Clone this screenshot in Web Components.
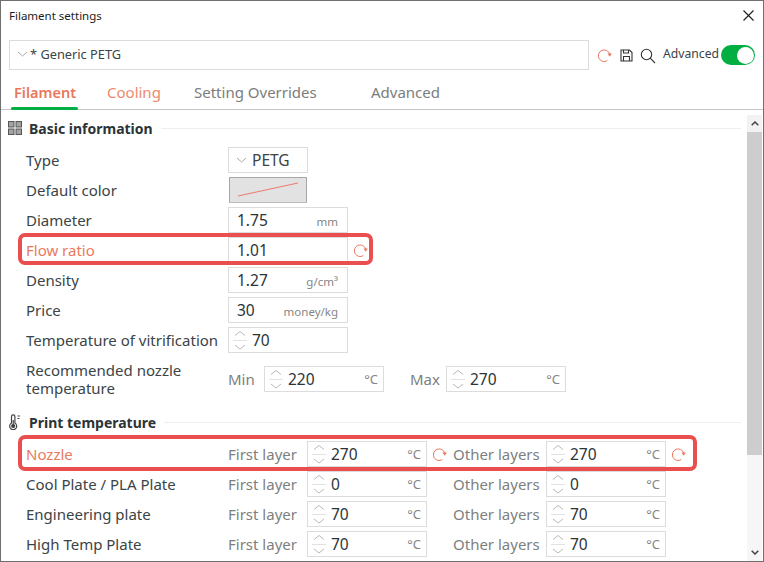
<!doctype html>
<html>
<head>
<meta charset="utf-8">
<style>
  html, body { margin: 0; background: #fff; }
  body { font-family: "Noto Sans", "Liberation Sans", sans-serif; color: #2b3436; }
</style>
</head>
<body>
<filament-dialog>
  <tab-item slot="tabs" active style="width:93px">Filament</tab-item>
  <tab-item slot="tabs" changed style="width:87px">Cooling</tab-item>
  <tab-item slot="tabs" style="width:177px">Setting Overrides</tab-item>
  <tab-item slot="tabs">Advanced</tab-item>

  <section-head icon="grid" style="height:36px;margin-bottom:-1px">Basic information</section-head>

  <setting-row label="Type"><combo-field>PETG</combo-field></setting-row>
  <setting-row label="Default color"><color-field></color-field></setting-row>
  <setting-row label="Diameter"><num-field value="1.75" unit="mm"></num-field></setting-row>
  <setting-row label="Flow ratio" changed>
    <num-field value="1.01"></num-field><reset-slot on></reset-slot>
    <red-mark slot="mark" style="width:355px;top:-2px;bottom:0"></red-mark>
  </setting-row>
  <setting-row label="Density"><num-field value="1.27" unit="g/cm³"></num-field></setting-row>
  <setting-row label="Price"><num-field value="30" unit="money/kg"></num-field></setting-row>
  <setting-row label="Temperature of vitrification"><num-field value="70" spin></num-field></setting-row>
  <setting-row tall label="Recommended nozzle temperature">
    <side-label style="width:36px">Min</side-label><num-field value="220" unit="°C" spin></num-field>
    <reset-slot></reset-slot>
    <side-label style="width:36px">Max</side-label><num-field value="270" unit="°C" spin></num-field>
  </setting-row>

  <section-head icon="thermo" style="height:40px;padding-top:6px">Print temperature</section-head>

  <setting-row label="Nozzle" changed>
    <side-label>First layer</side-label><num-field value="270" unit="°C" spin></num-field>
    <reset-slot on></reset-slot>
    <side-label style="width:93px">Other layers</side-label><num-field value="270" unit="°C" spin></num-field>
    <reset-slot on></reset-slot>
    <red-mark slot="mark" style="width:679px;top:-4px;bottom:-2px"></red-mark>
  </setting-row>
  <setting-row label="Cool Plate / PLA Plate">
    <side-label>First layer</side-label><num-field value="0" unit="°C" spin></num-field>
    <reset-slot></reset-slot>
    <side-label style="width:93px">Other layers</side-label><num-field value="0" unit="°C" spin></num-field>
  </setting-row>
  <setting-row label="Engineering plate">
    <side-label>First layer</side-label><num-field value="70" unit="°C" spin></num-field>
    <reset-slot></reset-slot>
    <side-label style="width:93px">Other layers</side-label><num-field value="70" unit="°C" spin></num-field>
  </setting-row>
  <setting-row label="High Temp Plate">
    <side-label>First layer</side-label><num-field value="70" unit="°C" spin></num-field>
    <reset-slot></reset-slot>
    <side-label style="width:93px">Other layers</side-label><num-field value="70" unit="°C" spin></num-field>
  </setting-row>
</filament-dialog>

<script>
const RESET_ICON = /* html */`
  <svg width="14" height="14" viewBox="0 0 14 14" fill="none" stroke="#ea7a5e" stroke-width="1">
    <path d="M9.300 12.600A5.800 5.800 0 1 1 11.700 6"/>
    <path d="M9.400 5.600h4.400L11.800 8.800z" stroke="none" fill="#ea7a5e"/>
  </svg>`;

class ResetSlot extends HTMLElement {
  constructor() {
    super();
    this.attachShadow({ mode: "open" });
  }

  connectedCallback() {
    this.shadowRoot.innerHTML = /* html */`
    <style>
      :host { display: flex; align-items: center; justify-content: center; width: 26px; height: 26px; flex: none; }
    </style>
    ${this.hasAttribute("on") ? RESET_ICON : ""}`;
  }
}

class SideLabel extends HTMLElement {
  constructor() {
    super();
    this.attachShadow({ mode: "open" });
    this.shadowRoot.innerHTML = /* html */`
    <style>
      :host { display: block; flex: none; width: 79px; color: #7d7f7f; font-size: 15px; white-space: nowrap; }
    </style>
    <slot></slot>`;
  }
}

class RedMark extends HTMLElement {
  constructor() {
    super();
    this.attachShadow({ mode: "open" });
    this.shadowRoot.innerHTML = /* html */`
    <style>
      :host {
        position: absolute;
        left: 17px;
        box-sizing: border-box;
        border: 4px solid #ea4f4f;
        border-radius: 7px;
        pointer-events: none;
      }
    </style>`;
  }
}

class NumField extends HTMLElement {
  constructor() {
    super();
    this.attachShadow({ mode: "open" });
  }

  connectedCallback() {
    const unit = this.getAttribute("unit") || "";
    const spin = this.hasAttribute("spin") ? /* html */`
      <svg class="spin" width="14" height="24" viewBox="0 0 14 24" fill="none" stroke="#b9b9b9" stroke-width="1">
        <path d="M2 7.500 7 3.500l5 4"/>
        <path d="M0 12.500h14" stroke="#e2e2e2"/>
        <path d="M2 17 7 21l5-4"/>
      </svg>` : "";
    this.shadowRoot.innerHTML = /* html */`
    <style>
      :host {
        display: flex;
        align-items: center;
        flex: none;
        box-sizing: border-box;
        width: 120px;
        height: 26px;
        padding: 0 9px 0 8px;
        background: #fff;
        border: 1px solid #dcdcdc;
      }
      :host([spin]) { padding: 0 5px 0 4px; }
      .spin { flex: none; margin-right: 5px; }
      .value { flex: 1; color: #2b3436; font-size: 15.500px; }
      .unit { color: #858585; font-size: 11.500px; margin-top: 2px; }
      :host([spin]) .unit { font-size: 13px; margin-top: 0; }
    </style>
    ${spin}
    <span class="value">${this.getAttribute("value")}</span>
    <span class="unit">${unit}</span>`;
  }
}

class ComboField extends HTMLElement {
  constructor() {
    super();
    this.attachShadow({ mode: "open" });
    this.shadowRoot.innerHTML = /* html */`
    <style>
      :host {
        display: flex;
        align-items: center;
        gap: 5px;
        flex: none;
        box-sizing: border-box;
        width: 80px;
        height: 26px;
        padding-left: 7px;
        border: 1px solid #dcdcdc;
        font-size: 15.500px;
      }
    </style>
    <svg width="11" height="6" viewBox="0 0 11 6" fill="none" stroke="#a9a9a9"><path d="M1 1l4.500 4L10 1"/></svg>
    <slot></slot>`;
  }
}

class ColorField extends HTMLElement {
  constructor() {
    super();
    this.attachShadow({ mode: "open" });
    this.shadowRoot.innerHTML = /* html */`
    <style>
      :host {
        display: block;
        flex: none;
        box-sizing: border-box;
        width: 78px;
        height: 26px;
        margin-left: 1px;
        background: #e2e2e2;
        border: 1px solid #a8a8a8;
        border-bottom-color: #bdbdbd;
      }
      svg { display: block; }
    </style>
    <svg width="76" height="24" viewBox="0 0 76 24"><path d="M8 18 68 5" stroke="#ea7a6a" fill="none"/></svg>`;
  }
}

class SettingRow extends HTMLElement {
  constructor() {
    super();
    this.attachShadow({ mode: "open" });
  }

  connectedCallback() {
    this.shadowRoot.innerHTML = /* html */`
    <style>
      :host {
        display: flex;
        align-items: center;
        position: relative;
        height: 30px;
        padding-left: 25px;
        font-size: 15px;
        color: #3b4446;
      }
      :host([tall]) { height: 40px; margin-top: 4px; }
      :host([changed]) .label { color: #ea7a5e; }
      .label { flex: none; width: 202px; line-height: 18px; white-space: nowrap; }
      :host([tall]) .label { width: 190px; margin-right: 12px; white-space: normal; }
    </style>
    <div class="label">${this.getAttribute("label")}</div>
    <slot></slot>
    <slot name="mark"></slot>`;
  }
}

class SectionHead extends HTMLElement {
  constructor() {
    super();
    this.attachShadow({ mode: "open" });
  }

  static get icons() {
    return {
      grid: /* html */`
        <svg width="14" height="14" viewBox="0 0 14 14" fill="#a3a3a3" stroke="#555" stroke-width="1">
          <rect x=".5" y=".5" width="5.500" height="5.500"/><rect x="8" y=".5" width="5.500" height="5.500"/>
          <rect x=".5" y="8" width="5.500" height="5.500"/><rect x="8" y="8" width="5.500" height="5.500"/>
        </svg>`,
      thermo: /* html */`
        <svg width="14" height="16" viewBox="0 0 14 16" fill="none" stroke="#444" stroke-width="1.200">
          <path d="M3.500 2.500a1.700 1.700 0 0 1 3.400 0v6.600a3.500 3.500 0 1 1-3.400 0z"/>
          <circle cx="5.200" cy="12" r="1.500" fill="#444"/>
          <path d="M5.200 6v5M9.500 2h2.500M9.500 4.500h2"/>
        </svg>`
    };
  }

  connectedCallback() {
    this.shadowRoot.innerHTML = /* html */`
    <style>
      :host {
        display: flex;
        align-items: center;
        box-sizing: border-box;
        padding: 0 6px 0 7px;
        font-size: 14px;
        font-weight: 700;
        color: #2b3436;
      }
      svg { flex: none; margin-right: 7px; }
      .line { flex: 1; height: 1px; margin-left: 8px; background: #eeeeee; }
    </style>
    ${SectionHead.icons[this.getAttribute("icon")]}
    <slot></slot>
    <div class="line"></div>`;
  }
}

class TabItem extends HTMLElement {
  constructor() {
    super();
    this.attachShadow({ mode: "open" });
    this.shadowRoot.innerHTML = /* html */`
    <style>
      :host {
        display: block;
        flex: none;
        position: relative;
        box-sizing: border-box;
        height: 40px;
        padding-top: 2px;
        color: #7b7d7d;
        font-size: 15px;
        line-height: 40px;
        white-space: nowrap;
      }
      :host([changed]) { color: #ec8a70; }
      :host([active]) { color: #e9775a; font-size: 14.500px; font-weight: 600; }
      :host([active])::after {
        content: "";
        position: absolute;
        left: -3px;
        width: 67px;
        bottom: 0;
        height: 3px;
        border-radius: 2px;
        background: #00ae42;
      }
    </style>
    <slot></slot>`;
  }
}

class FilamentDialog extends HTMLElement {
  constructor() {
    super();
    this.attachShadow({ mode: "open" });
  }

  static get styles() {
    return /* css */`
      :host {
        display: flex;
        flex-direction: column;
        box-sizing: border-box;
        width: 764px;
        height: 562px;
        overflow: hidden;
        background: #fff;
        border: 1px solid #6f6f6f;
      }

      .title {
        display: flex;
        align-items: center;
        justify-content: space-between;
        flex: none;
        height: 28px;
        padding: 0 9px 0 8px;
        font-size: 11.500px;
        color: #1c1c1c;
      }

      .title svg { margin-top: 1px; }

      .presets {
        display: flex;
        align-items: center;
        flex: none;
        height: 30px;
        margin-top: 11px;
        padding-left: 8px;
      }

      .preset {
        display: flex;
        align-items: center;
        gap: 2px;
        box-sizing: border-box;
        width: 580px;
        height: 30px;
        padding: 0 0 2px 7px;
        border: 1px solid #dcdcdc;
        font-size: 12.800px;
        color: #3b4446;
      }

      .tools {
        display: flex;
        align-items: center;
        flex: none;
        margin-left: 9px;
      }

      .advanced { margin: -3px 2px 0 7px; font-size: 12.200px; color: #3b4446; }

      .toggle {
        position: relative;
        box-sizing: border-box;
        width: 34px;
        height: 20px;
        border-radius: 10px;
        background: #00ae42;
      }

      .toggle::after {
        content: "";
        position: absolute;
        right: 1px;
        top: 1.500px;
        width: 17px;
        height: 17px;
        border-radius: 50%;
        background: #fff;
      }

      .tabs {
        display: flex;
        flex: none;
        box-sizing: border-box;
        height: 40px;
        padding-left: 13px;
        border-bottom: 1px solid #c4c4c4;
      }

      .body {
        display: flex;
        flex: 1;
        min-height: 0;
      }

      .content {
        flex: 1;
        min-width: 0;
        overflow: hidden;
      }

      .scrollbar {
        display: flex;
        flex-direction: column;
        flex: none;
        width: 15px;
        margin: 5px 1px 0 0;
        background: #f6f6f6;
      }

      .scrollbar .arrow {
        display: flex;
        align-items: center;
        justify-content: center;
        flex: none;
        height: 17px;
      }

      .scrollbar .thumb { flex: none; height: 323px; background: #cdcdcd; }
      .scrollbar .rest { flex: 1; }
    `;
  }

  connectedCallback() {
    this.shadowRoot.innerHTML = /* html */`
    <style>${FilamentDialog.styles}</style>
    <div class="title">
      <span>Filament settings</span>
      <svg width="11" height="11" viewBox="0 0 11 11" stroke="#1c1c1c" stroke-width="1.100"><path d="M.5.5l10 10M10.500.5l-10 10"/></svg>
    </div>
    <div class="presets">
      <div class="preset">
        <svg width="11" height="6" viewBox="0 0 11 6" fill="none" stroke="#a9a9a9"><path d="M1 1l4.500 4L10 1"/></svg>
        <span>* Generic PETG</span>
      </div>
      <div class="tools">
        ${RESET_ICON}
        <svg style="margin-left:8px" width="13" height="13" viewBox="0 0 13 13" fill="none" stroke="#333" stroke-width="1.100">
          <path d="M1 1h8.500L12 3.500V12H1z"/><path d="M3.500 1v3h5V1M3.500 12V7.500h6V12"/>
        </svg>
        <svg style="margin:2px 0 0 7px" width="16" height="16" viewBox="0 0 16 16" fill="none" stroke="#333" stroke-width="1.100">
          <circle cx="6.500" cy="6.500" r="5.200"/><path d="M10.200 10.200 15 15"/>
        </svg>
        <span class="advanced">Advanced</span>
        <div class="toggle"></div>
      </div>
    </div>
    <div class="tabs"><slot name="tabs"></slot></div>
    <div class="body">
      <div class="content"><slot></slot></div>
      <div class="scrollbar">
        <div class="arrow" style="background:#f2f2f2">
          <svg width="8" height="5" viewBox="0 0 8 5" fill="none" stroke="#444" stroke-width="1.500"><path d="M.7 4.300 4 1l3.300 3.300"/></svg>
        </div>
        <div class="thumb"></div>
        <div class="rest"></div>
        <div class="arrow">
          <svg width="8" height="5" viewBox="0 0 8 5" fill="none" stroke="#444" stroke-width="1.500"><path d="M.7.700 4 4l3.300-3.300"/></svg>
        </div>
      </div>
    </div>`;
  }
}

customElements.define("reset-slot", ResetSlot);
customElements.define("side-label", SideLabel);
customElements.define("red-mark", RedMark);
customElements.define("num-field", NumField);
customElements.define("combo-field", ComboField);
customElements.define("color-field", ColorField);
customElements.define("setting-row", SettingRow);
customElements.define("section-head", SectionHead);
customElements.define("tab-item", TabItem);
customElements.define("filament-dialog", FilamentDialog);
</script>
</body>
</html>
